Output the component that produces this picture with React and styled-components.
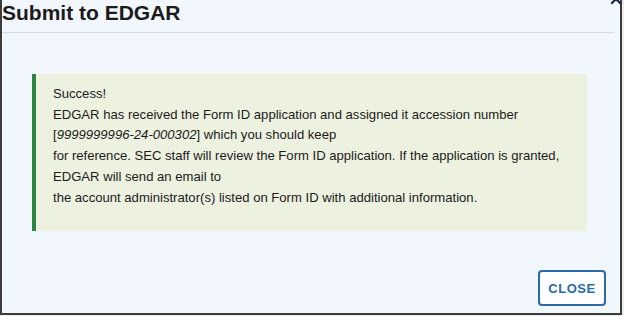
import React from 'react'
import styled, { createGlobalStyle } from 'styled-components'

const GlobalStyle = createGlobalStyle`
    html, body {
        margin: 0;
        padding: 0;
        background: #ececec;
        overflow: hidden;
    }
`;

const Dialog = styled.div`
    position: relative;
    box-sizing: border-box;
    width: 622px;
    height: 315px;
    display: flex;
    flex-direction: column;
    background: #f2f7fd;
    border: 2px solid #3c3c3c;
    border-top: none;
    font-family: "Liberation Sans", Arial, sans-serif;
    color: #1b1b1b;
`;

const Header = styled.div`
    margin-right: 6px;
    padding: 1px 0 7px 0;
    border-bottom: 1px solid #d9dcdf;
`;

const Title = styled.h2`
    margin: 0;
    font-size: 21px;
    line-height: 24px;
    font-weight: bold;
    color: #1b1b1b;
`;

const CloseIcon = styled.button`
    position: absolute;
    top: -7px;
    right: -2px;
    width: 12px;
    height: 12px;
    padding: 0;
    border: none;
    background: none;
    color: #1b2a3a;
    cursor: pointer;
`;

const Body = styled.div`
    padding: 41px 33px 0 30px;
`;

const Alert = styled.div`
    box-sizing: border-box;
    padding: 10px 16px 23px 17px;
    background: #edf1e0;
    border-left: 4px solid #2e8540;
    font-size: 13.1px;
    line-height: 20.7px;
    color: #1b1b1b;
`;

const Footer = styled.div`
    display: flex;
    justify-content: flex-end;
    padding: 39px 14px 0 0;
`;

const Button = styled.button`
    box-sizing: border-box;
    width: 68px;
    height: 36px;
    border: 2px solid #2a6aa8;
    border-radius: 4px;
    background: #ffffff;
    color: #2a6aa8;
    font-family: "Liberation Sans", Arial, sans-serif;
    font-size: 13px;
    font-weight: bold;
    letter-spacing: 0.5px;
    cursor: pointer;
`;

const App = () => {
    return (
        <>
            <GlobalStyle />
            <Dialog>
                <CloseIcon aria-label="Close">
                    <svg width="12" height="12" viewBox="0 0 12 12">
                        <path d="M2 2 L10 10 M10 2 L2 10" stroke="currentColor" strokeWidth="2.2" strokeLinecap="square" />
                    </svg>
                </CloseIcon>
                <Header>
                    <Title>Submit to EDGAR</Title>
                </Header>
                <Body>
                    <Alert>
                        Success!<br />
                        EDGAR has received the Form ID application and assigned it accession number<br />
                        [<i>9999999996-24-000302</i>] which you should keep<br />
                        for reference. SEC staff will review the Form ID application. If the application is granted,<br />
                        EDGAR will send an email to<br />
                        the account administrator(s) listed on Form ID with additional information.
                    </Alert>
                </Body>
                <Footer>
                    <Button>CLOSE</Button>
                </Footer>
            </Dialog>
        </>
    )
}

export default App;
